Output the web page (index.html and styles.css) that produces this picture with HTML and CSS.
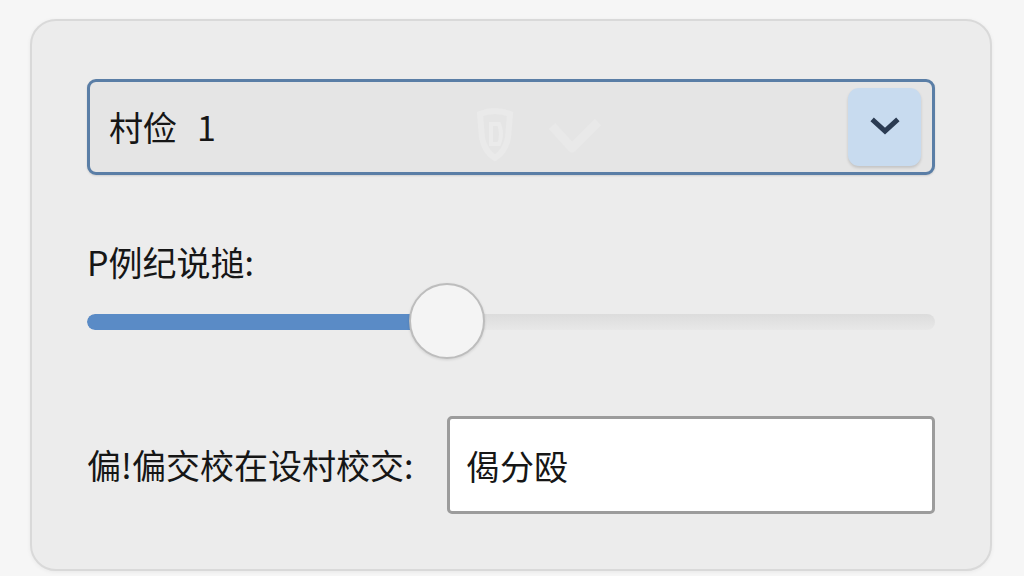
FILE: index.html
```html
<!DOCTYPE html>
<html lang="zh">
<head>
<meta charset="utf-8">
<title>Settings</title>
<link rel="stylesheet" href="styles.css">
</head>
<body>
<div class="panel">
  <div class="select">
    <span class="select-text">村俭<span class="num">1</span></span>
    <svg class="watermark" width="140" height="60" viewBox="0 0 140 60" aria-hidden="true">
      <path d="M10 10 Q25 4 40 10 L38 34 Q35 48 25 54 Q15 48 12 34 Z" fill="none" stroke="#eaeaea" stroke-width="6"/>
      <path d="M21 20 L29 20 Q33 30 29 40 L21 40 Z" fill="none" stroke="#ebebeb" stroke-width="4"/>
      <path d="M82 22 L102 44 L128 18" fill="none" stroke="#e9e9e9" stroke-width="9" stroke-linejoin="round"/>
    </svg>
    <div class="select-btn">
      <svg width="30" height="20" viewBox="0 0 30 20" aria-hidden="true">
        <path d="M4 4 L15 14 L26 4" fill="none" stroke="#2b3b52" stroke-width="5" stroke-linecap="square"/>
      </svg>
    </div>
  </div>

  <div class="label">P例纪说搥:</div>

  <div class="slider">
    <div class="track">
      <div class="fill" style="width: 360px"></div>
    </div>
    <div class="thumb"></div>
  </div>

  <div class="row">
    <div class="label">偏!偏交校在设村校交:</div>
    <div class="input">偈分殴</div>
  </div>
</div>
</body>
</html>
```
FILE: styles.css
```css
* { box-sizing: border-box; }

html, body {
  margin: 0;
  padding: 0;
  background: #f6f6f6;
  width: 1024px;
  height: 576px;
  overflow: hidden;
  font-family: "Noto Sans CJK SC", "Noto Sans", sans-serif;
  color: #161616;
}

body {
  padding: 19px 32px 0 30px;
}

.panel {
  width: 962px;
  height: 552px;
  background: #ececec;
  border: 2px solid #d9d9d9;
  border-radius: 26px;
  padding: 58px 55px 0 55px;
  display: flex;
  flex-direction: column;
  box-shadow: 0 1px 4px rgba(0,0,0,0.06);
}

.select {
  position: relative;
  height: 96px;
  border: 3px solid #5a7ea6;
  border-radius: 9px;
  background: #e5e5e5;
  display: flex;
  align-items: center;
  padding: 0 11px 0 19px;
  box-shadow: 0 1px 2px rgba(0,0,0,0.12);
}

.select-text {
  font-size: 34px;
  line-height: 1;
  flex: 1;
}

.num {
  margin-left: 20px;
}

.watermark {
  position: absolute;
  left: 380px;
  top: 22px;
}

.select-btn {
  width: 73px;
  height: 78px;
  border-radius: 11px;
  background: #c8dbef;
  display: flex;
  align-items: center;
  justify-content: center;
  box-shadow: 0 2px 3px rgba(0,0,0,0.15);
}

.label {
  font-size: 34px;
  line-height: 40px;
  white-space: nowrap;
}

.panel > .label {
  margin-top: 67px;
}

.slider {
  position: relative;
  height: 78px;
  margin-top: 1px;
  display: flex;
  align-items: center;
}

.track {
  width: 100%;
  height: 16px;
  border-radius: 8px;
  background: linear-gradient(#dcdcdc, #e8e8e8);
  overflow: hidden;
}

.fill {
  height: 100%;
  background: #5a8bc6;
  border-radius: 8px 0 0 8px;
}

.thumb {
  position: absolute;
  left: 322px;
  top: 0;
  width: 76px;
  height: 76px;
  border-radius: 50%;
  background: #f4f4f4;
  border: 2px solid #bdbdbd;
  box-shadow: 0 1px 3px rgba(0,0,0,0.12);
}

.row {
  margin-top: 55px;
  display: flex;
  align-items: center;
}

.input {
  margin-left: auto;
  width: 488px;
  height: 98px;
  background: #ffffff;
  border: 3px solid #9c9c9c;
  border-radius: 5px;
  padding-left: 16px;
  display: flex;
  align-items: center;
  font-size: 34px;
}
```
